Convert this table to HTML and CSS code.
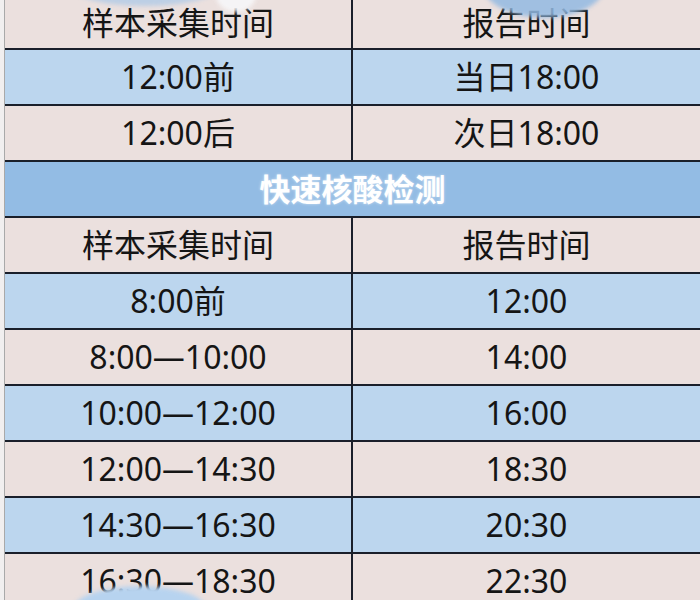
FILE: index.html
```html
<!DOCTYPE html>
<html lang="zh-CN">
<head>
<meta charset="utf-8">
<title>核酸检测报告时间</title>
<link rel="stylesheet" href="styles.css">
</head>
<body>
<div class="page">
  <div class="sheet">
    <div class="cell pink first">样本采集时间</div>
    <div class="cell pink first right">报告时间</div>
    <div class="cell blue">12:00前</div>
    <div class="cell blue right">当日18:00</div>
    <div class="cell pink">12:00后</div>
    <div class="cell pink right">次日18:00</div>
    <div class="cell title">快速核酸检测</div>
    <div class="cell pink">样本采集时间</div>
    <div class="cell pink right">报告时间</div>
    <div class="cell blue">8:00前</div>
    <div class="cell blue right">12:00</div>
    <div class="cell pink">8:00—10:00</div>
    <div class="cell pink right">14:00</div>
    <div class="cell blue">10:00—12:00</div>
    <div class="cell blue right">16:00</div>
    <div class="cell pink">12:00—14:30</div>
    <div class="cell pink right">18:30</div>
    <div class="cell blue">14:30—16:30</div>
    <div class="cell blue right">20:30</div>
    <div class="cell pink">16:30—18:30</div>
    <div class="cell pink right">22:30</div>
  </div>
  <div class="blob blob-tl"></div>
  <div class="blob blob-tl2"></div>
  <div class="blob blob-tr"></div>
  <div class="blob blob-bl"></div>
</div>
</body>
</html>
```
FILE: styles.css
```css
html, body {
  margin: 0;
  padding: 0;
  background: #f1efef;
}
.page {
  position: relative;
  width: 700px;
  height: 600px;
  overflow: hidden;
  padding-left: 4px;
  box-sizing: border-box;
}
.sheet {
  display: grid;
  grid-template-columns: 348px 1fr;
  grid-auto-rows: 56px;
  grid-template-rows: 50px;
  border-left: 1px solid #a9a9a9;
  font-family: "Noto Sans", "Noto Sans CJK SC", sans-serif;
  font-size: 32px;
  color: #151515;
}
.cell {
  display: flex;
  align-items: center;
  justify-content: center;
  border-bottom: 2px solid #1a1f2a;
  box-sizing: border-box;
  line-height: 1;
}
.cell.first {
  padding-bottom: 2px;
}
.cell:not(.right):not(.title) {
  border-right: 2px solid #1a1f2a;
}
.pink {
  background: #ebe0de;
}
.blue {
  background: #bcd6ee;
}
.title {
  grid-column: 1 / 3;
  background: #93bce4;
  color: #ffffff;
  font-weight: 700;
  font-size: 31px;
  text-shadow: 0 0 3px rgba(255, 255, 255, 0.55);
}
.blob {
  position: absolute;
  border-radius: 50%;
  filter: blur(2px);
  z-index: 3;
}
.blob-tl {
  left: 70px;
  top: -34px;
  width: 150px;
  height: 40px;
  background: #a9c8e8;
  opacity: 0.7;
}
.blob-tl2 {
  left: 216px;
  top: -22px;
  width: 40px;
  height: 34px;
  background: #f7f7f9;
  opacity: 0.9;
}
.blob-tr {
  left: 482px;
  top: -52px;
  width: 124px;
  height: 70px;
  background: #93bae2;
  opacity: 0.85;
}
.blob-bl {
  left: 72px;
  top: 586px;
  width: 136px;
  height: 50px;
  background: #b7d3ef;
}
```
